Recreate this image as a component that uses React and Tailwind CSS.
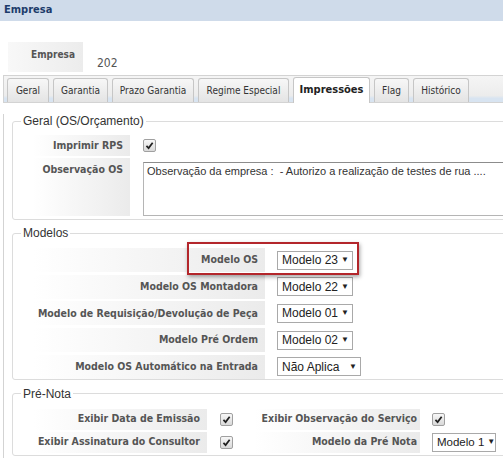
const cond = "font-['DejaVu_Sans_Condensed','DejaVu_Sans',sans-serif]";
const lbl = `${cond} font-bold text-[10.5px] text-[#555] text-right bg-gradient-to-r from-white to-[#ebebeb] shrink-0`;

function Check() {
  return (
    <span className="inline-flex h-[13px] w-[13px] items-center justify-center rounded-[2px] border border-[#a0a0a0] bg-gradient-to-b from-[#f7f7f7] to-[#d9d9d9]">
      <svg viewBox="0 0 10 10" className="h-[9px] w-[9px]">
        <path d="M1.6 5.4 L4 7.9 L8.5 2" fill="none" stroke="#1f1f1f" strokeWidth="1.9" />
      </svg>
    </span>
  );
}

function Select({ text, w, size = 'text-[12px]' }) {
  return (
    <div
      className={`flex h-[19px] shrink-0 items-center justify-between gap-[3px] whitespace-nowrap border border-[#a9a9a9] bg-white pl-[4px] pr-[3px] leading-none text-[#222] ${size} ${w}`}
    >
      <span>{text}</span>
      <span className="text-[8px]">▼</span>
    </div>
  );
}

const tabs = [
  { t: 'Geral', w: 'w-[42px]' },
  { t: 'Garantia', w: 'w-[55px]' },
  { t: 'Prazo Garantia', w: 'w-[82px]' },
  { t: 'Regime Especial', w: 'w-[91px]' },
  { t: 'Impressões', w: 'w-[77px]', active: true },
  { t: 'Flag', w: 'w-[35px]' },
  { t: 'Histórico', w: 'w-[56px]' },
];

const modelos = [
  { l: 'Modelo OS', v: 'Modelo 23', w: 'w-[76px]' },
  { l: 'Modelo OS Montadora', v: 'Modelo 22', w: 'w-[76px]' },
  { l: 'Modelo de Requisição/Devolução de Peça', v: 'Modelo 01', w: 'w-[76px]' },
  { l: 'Modelo Pré Ordem', v: 'Modelo 02', w: 'w-[76px]' },
  { l: 'Modelo OS Automático na Entrada', v: 'Não Aplica', w: 'w-[84px]' },
];

export default function App() {
  return (
    <div className="relative h-[458px] w-[503px] overflow-hidden bg-white font-['Liberation_Sans',Arial,sans-serif] text-[#333]">
      {/* cabeçalho */}
      <div className={`flex h-[21px] items-center bg-[#cfdbea] pl-[4px] ${cond} text-[11px] font-bold text-[#1d3b6b]`}>
        Empresa
      </div>

      <div className="ml-[8px] mt-[21px] flex">
        <div className={`h-[30px] w-[75px] bg-gradient-to-r from-[#f8f8f8] to-[#ececec] pr-[8px] pt-[5px] text-right ${cond} text-[10px] font-bold text-[#555]`}>
          Empresa
        </div>
        <div className={`pl-[14px] pt-[12px] ${cond} text-[12px] text-[#555]`}>202</div>
      </div>

      <div className="ml-[3px] mt-[3px] w-[570px]">
        {/* abas */}
        <div className="flex h-[28px] items-end gap-[4px] border border-[#d3d3d3] bg-[linear-gradient(to_bottom,#f5f5f5_0%,#ececec_75%,#d8e4f1_86%,#d8e4f1_100%)] pl-[3px]">
          {tabs.map((tab) => (
            <div
              key={tab.t}
              className={`flex items-center justify-center rounded-t-[3px] border border-b-0 border-[#c6c6c6] ${cond} text-[10px] ${tab.w} ${
                tab.active
                  ? '-mb-px h-[26px] bg-white font-bold text-[11px] text-[#222]'
                  : 'h-[24px] bg-gradient-to-b from-[#f7f7f7] to-[#e4e4e4] text-[#333]'
              }`}
            >
              {tab.t}
            </div>
          ))}
        </div>

        {/* painel */}
        <div className="h-[360px] border-l border-[#d3d3d3] pl-[8px]">
          <fieldset className="mt-[11px] rounded-[3px] border border-[#dcdcdc] pb-[3px]">
            <legend className="ml-[8px] px-[2px] text-[12px] leading-[14px] text-[#333]">Geral (OS/Orçamento)</legend>
            <div className="ml-[20px] mt-[7px] flex flex-col gap-[2px]">
              <div className="flex h-[21px]">
                <div className={`flex w-[97px] items-center justify-end pr-[7px] ${lbl}`}>Imprimir RPS</div>
                <div className="flex items-center pl-[13px]">
                  <Check />
                </div>
              </div>
              <div className="flex h-[58px]">
                <div className={`w-[97px] pr-[7px] pt-[4px] ${lbl}`}>Observação OS</div>
                <div className="pl-[13px] pt-[4px]">
                  <div className="h-[54px] w-[400px] whitespace-nowrap border border-[#b5b5b5] border-t-[#8c8c8c] px-[3px] pt-[1px] text-[11px] leading-[14px] text-[#333]">
                    Observação da empresa :&nbsp; - Autorizo a realização de testes de rua ....
                  </div>
                </div>
              </div>
            </div>
          </fieldset>

          <fieldset className="mt-[6px] rounded-[3px] border border-[#dcdcdc]">
            <legend className="ml-[8px] px-[2px] text-[12px] leading-[14px] text-[#333]">Modelos</legend>
            <div className="relative ml-[20px] mt-[8px] flex flex-col gap-[2.7px]">
              {modelos.map((m) => (
                <div key={m.l} className="flex h-[24px]">
                  <div className={`flex w-[232px] items-center justify-end pr-[7px] ${lbl}`}>{m.l}</div>
                  <div className="flex shrink-0 items-center pl-[12px]">
                    <Select text={m.v} w={m.w} />
                  </div>
                </div>
              ))}
              <div className="absolute left-[154px] top-[-6px] h-[33px] w-[172px] border-2 border-[#b3262b] shadow-[1px_2px_4px_rgba(0,0,0,0.35)]" />
            </div>
          </fieldset>

          <fieldset className="mt-[7px] rounded-[3px] border border-[#dcdcdc] pb-[2px]">
            <legend className="ml-[8px] px-[2px] text-[12px] leading-[14px] text-[#333]">Pré-Nota</legend>
            <div className="ml-[20px] mt-[8px] flex flex-col gap-[2px]">
              <div className="flex h-[21px]">
                <div className={`flex w-[174px] items-center justify-end pr-[7px] ${lbl}`}>Exibir Data de Emissão</div>
                <div className="flex w-[48px] shrink-0 items-center pl-[13px]">
                  <Check />
                </div>
                <div className={`flex w-[165px] items-center justify-end pr-[3px] ${lbl}`}>Exibir Observação do Serviço</div>
                <div className="flex shrink-0 items-center pl-[12px]">
                  <Check />
                </div>
              </div>
              <div className="flex h-[21px]">
                <div className={`flex w-[174px] items-center justify-end pr-[7px] ${lbl}`}>Exibir Assinatura do Consultor</div>
                <div className="flex w-[48px] shrink-0 items-center pl-[13px]">
                  <Check />
                </div>
                <div className={`flex w-[165px] items-center justify-end pr-[3px] ${lbl}`}>Modelo da Pré Nota</div>
                <div className="flex shrink-0 items-center pl-[12px]">
                  <Select text="Modelo 1" w="w-[64px]" size="text-[11.5px]" />
                </div>
              </div>
            </div>
          </fieldset>
        </div>
      </div>
    </div>
  );
}
